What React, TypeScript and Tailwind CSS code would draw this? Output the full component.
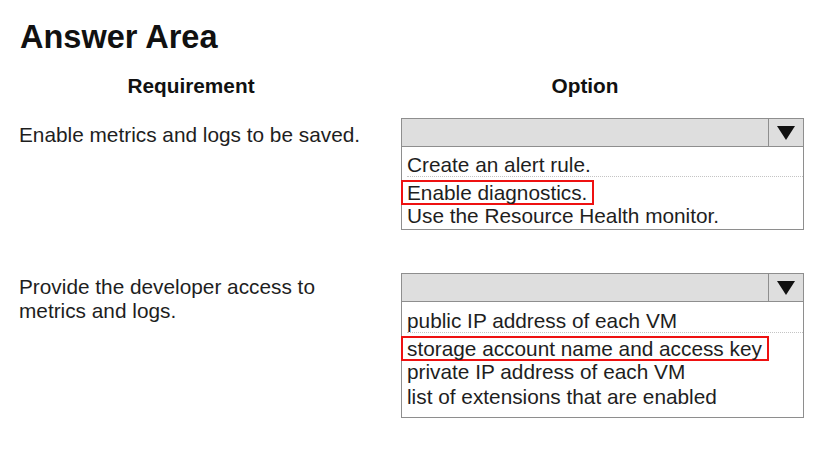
import React from "react";

function Arrow() {
  return (
    <svg width="18" height="14" viewBox="0 0 18 14">
      <polygon points="0,0 18,0 9,14" fill="#111" />
    </svg>
  );
}

function DropHeader() {
  return (
    <div className="flex h-[29px] border border-[#8e8e8e] bg-[#dedede]">
      <div className="flex-1" />
      <div className="flex w-[35px] items-center justify-center border-l border-[#8e8e8e]">
        <Arrow />
      </div>
    </div>
  );
}

function Row({ children, dotted }: { children: React.ReactNode; dotted?: boolean }) {
  return (
    <div
      className={
        "h-[25px] whitespace-nowrap leading-[25px] " +
        (dotted ? "border-b border-dotted border-[#c4c4c4]" : "")
      }
    >
      {children}
    </div>
  );
}

function Picked({ children }: { children: React.ReactNode }) {
  return (
    <div className="h-[26px] whitespace-nowrap">
      <span className="-ml-[6px] inline-block border-[2.5px] border-[#ee1111] pl-[4px] pr-[5px] leading-[21px]">
        {children}
      </span>
    </div>
  );
}

export default function App() {
  return (
    <div
      className="h-[449px] w-[840px] overflow-hidden bg-white text-[20.8px] text-[#1e1e1e]"
      style={{ fontFamily: '"Liberation Sans", Arial, sans-serif' }}
    >
      <div className="pl-[20px] pt-[19px] text-[32.5px] font-bold leading-[36px] text-[#111]">
        Answer Area
      </div>

      <div className="mt-[18px] flex font-bold leading-[25px] text-[#111]">
        <div className="w-[382px] text-center">Requirement</div>
        <div className="ml-[19px] w-[368px] text-center">Option</div>
      </div>

      <div className="mt-[20px] flex">
        <div className="w-[401px] pl-[19px] pt-[4px] leading-[25px]">
          Enable metrics and logs to be saved.
        </div>
        <div className="w-[403px]">
          <DropHeader />
          <div className="border border-t-0 border-[#8e8e8e] pb-[1px] pl-[5px] pt-[5px]">
            <Row dotted>Create an alert rule.</Row>
            <Picked>Enable diagnostics.</Picked>
            <Row>Use the Resource Health monitor.</Row>
          </div>
        </div>
      </div>

      <div className="mt-[43px] flex">
        <div className="w-[401px] pl-[19px] pt-[2px] leading-[24px]">
          Provide the developer access to
          <br />
          metrics and logs.
        </div>
        <div className="w-[403px]">
          <DropHeader />
          <div className="border border-t-0 border-[#8e8e8e] pb-[8px] pl-[5px] pt-[6px]">
            <Row dotted>public IP address of each VM</Row>
            <Picked>storage account name and access key</Picked>
            <Row>private IP address of each VM</Row>
            <Row>list of extensions that are enabled</Row>
          </div>
        </div>
      </div>
    </div>
  );
}
